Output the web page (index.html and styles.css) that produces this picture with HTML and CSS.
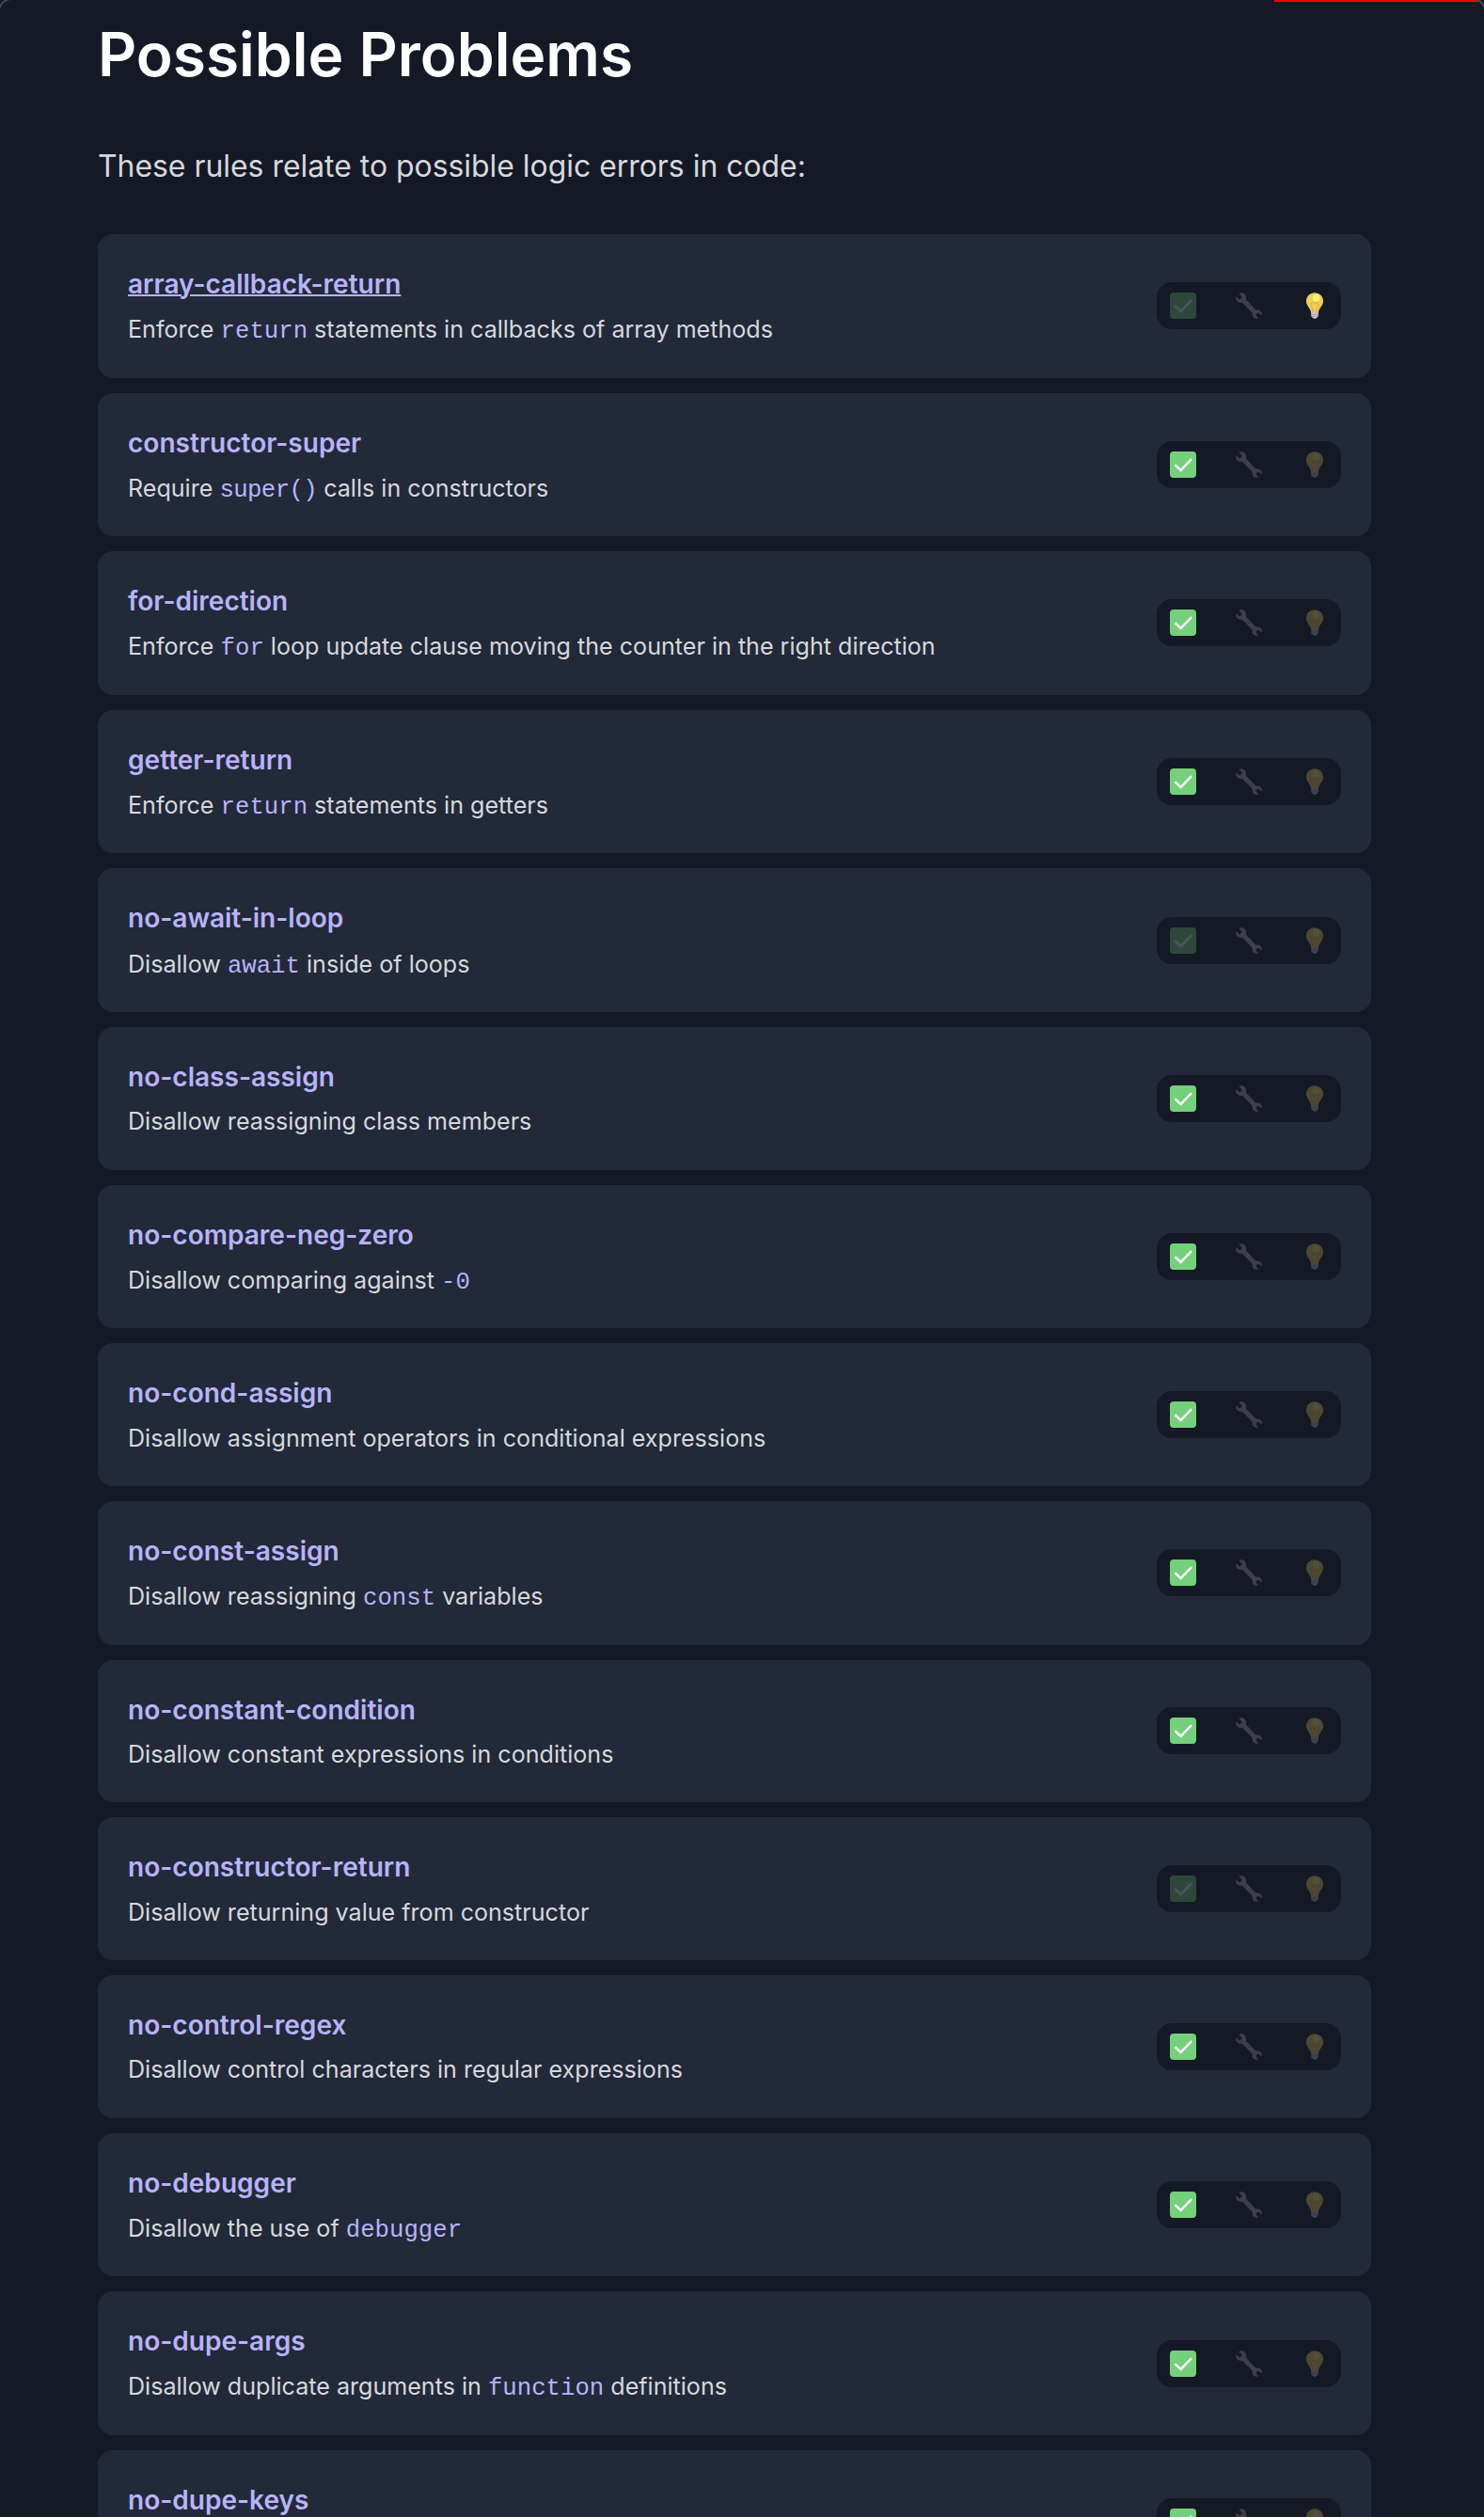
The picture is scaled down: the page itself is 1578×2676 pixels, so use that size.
FILE: index.html
```html
<!DOCTYPE html>
<html lang="en">
<head>
<meta charset="utf-8">
<title>Possible Problems</title>
<link rel="stylesheet" href="styles.css">
</head>
<body>
<div class="progress"></div>
<div class="frame"></div>
<svg class="defs" aria-hidden="true">
  <symbol id="check" viewBox="0 0 28 28">
    <rect width="28" height="28" rx="4" fill="#74d07a"/>
    <path d="M6 14.8 11.6 20 22.3 8.8" fill="none" stroke="#f3f5f4" stroke-width="2.6" stroke-linecap="round" stroke-linejoin="miter"/>
  </symbol>
  <symbol id="wrench" viewBox="0 0 28 28">
    <path fill="#ada9b2" d="M4.3.6C7.700-.8 11.500 2 11 6.200L10.800 7.400 21.300 18.600C24.500 17.900 27.900 19.500 28 23.500L27.300 24.200 24.800 22C23.400 20.900 20.700 23.500 21.900 25L24.100 27.300 23.300 27.800C19.600 28.300 16.900 25.400 17.700 21.700L6.900 10.800C3.300 11.500.4 9.200.1 5.500L.8 4.600 3.400 6.900C4.800 8 7.300 5.500 6.200 4L3.600 1.500Z"/>
  </symbol>
  <symbol id="bulb" viewBox="0 0 28 28">
    <path fill="#efcf58" d="M14 .2c5 0 9 3.900 9 8.700 0 5.500-4.600 7-5.300 13.100h-7.400C9.600 15.900 5 14.400 5 8.900 5 4.100 9 .2 14 .2Z"/>
    <path fill="none" stroke="#e5a83f" stroke-width="1" d="M12.300 21.500C12 16.500 9.300 14 10.100 11.500c.6-1.700 2.600-1.300 3 .3h2c.4-1.600 2.500-2 3-.3.700 2.500-2 5-2.400 10"/>
    <circle cx="15.500" cy="5.800" r="3.700" fill="#f9f17e"/>
    <path fill="#c9c9d0" d="M10.200 21.300h7.600v3.500l-1.600 2.200c-1.200 1-3.200 1-4.400 0l-1.600-2.200Z"/>
    <path stroke="#96969f" stroke-width=".8" d="m10.200 23.700 7.600-1M10.300 25.700l7.300-1"/>
  </symbol>
</svg>
<main class="page">
  <h1 class="title">Possible Problems</h1>
  <p class="intro">These rules relate to possible logic errors in code:</p>
  <div class="rules" id="rules"></div>
</main>
<script src="rules.js"></script>
</body>
</html>
```
FILE: rules.js
```js
// [name, description, recommended, has suggestions]
const rules = [
  ["array-callback-return", "Enforce <code>return</code> statements in callbacks of array methods", false, true],
  ["constructor-super", "Require <code class=\"call\">super()</code> calls in constructors", true, false],
  ["for-direction", "Enforce <code>for</code> loop update clause moving the counter in the right direction", true, false],
  ["getter-return", "Enforce <code>return</code> statements in getters", true, false],
  ["no-await-in-loop", "Disallow <code>await</code> inside of loops", false, false],
  ["no-class-assign", "Disallow reassigning class members", true, false],
  ["no-compare-neg-zero", "Disallow comparing against <code>-0</code>", true, false],
  ["no-cond-assign", "Disallow assignment operators in conditional expressions", true, false],
  ["no-const-assign", "Disallow reassigning <code>const</code> variables", true, false],
  ["no-constant-condition", "Disallow constant expressions in conditions", true, false],
  ["no-constructor-return", "Disallow returning value from constructor", false, false],
  ["no-control-regex", "Disallow control characters in regular expressions", true, false],
  ["no-debugger", "Disallow the use of <code>debugger</code>", true, false],
  ["no-dupe-args", "Disallow duplicate arguments in <code>function</code> definitions", true, false],
  ["no-dupe-keys", "", true, false]
];

const icon = (id, on) =>
  `<svg class="icon${on ? "" : " icon-off"}"><use href="#${id}"/></svg>`;

document.getElementById("rules").innerHTML = rules.map(([name, text, recommended, suggestions], i) => `
  <article class="rule">
    <div class="rule-text">
      <a class="rule-name${i === 0 ? " rule-name-hover" : ""}">${name}</a>
      <p class="rule-desc${text.includes("<code") ? " with-code" : ""}">${text}</p>
    </div>
    <div class="rule-types">${icon("check", recommended)}${icon("wrench", false)}${icon("bulb", suggestions)}</div>
  </article>`).join("");
```
FILE: styles.css
```css
html {
  background: #151926;
}

body {
  margin: 0;
  height: 2676px;
  overflow: hidden;
  background: #151926;
  color: #d5d8dd;
  font-family: Inter, sans-serif;
}

.defs {
  display: none;
}

.progress {
  position: absolute;
  top: 0;
  right: 0;
  width: 223px;
  height: 2px;
  background: #f00;
}

.frame {
  position: absolute;
  top: -2px;
  left: -2px;
  right: -2px;
  height: 2700px;
  border: 2px solid #44474f;
  border-radius: 14px;
  box-shadow: 0 0 0 6px #151926;
}

.page {
  padding: 19.6px 120px 0 104px;
}

.title {
  margin: 0;
  color: #fff;
  font-size: 64px;
  font-weight: 570;
  line-height: 76.8px;
}

.intro {
  margin: 57px 0 47.6px;
  font-size: 31.9px;
  line-height: 48px;
}

.rules {
  display: flex;
  flex-direction: column;
  gap: 16px;
}

.rule {
  display: flex;
  align-items: center;
  justify-content: space-between;
  padding: 32px;
  border-radius: 16px;
  background: #222938;
}

.rule-name {
  display: block;
  width: max-content;
  color: #b7b3fa;
  font-size: 28.05px;
  font-weight: 600;
  line-height: 42px;
}

.rule-name-hover {
  text-decoration: underline;
  text-decoration-thickness: 2px;
}

.rule-desc {
  min-height: 37.4px;
  margin: 8.3px 0 0;
  font-size: 25.1px;
  line-height: 37.4px;
}

.rule-desc.with-code {
  margin-top: 9.2px;
}

.rule-desc code {
  color: #b7b3fa;
  font-family: "Liberation Mono", monospace;
  font-size: 25.7px;
  line-height: 1;
}

.rule-desc .call {
  letter-spacing: -0.6px;
}

.rule-types {
  display: flex;
  align-items: center;
  justify-content: space-between;
  box-sizing: border-box;
  width: 196px;
  height: 50px;
  padding: 0 14px 0 13.5px;
  border-radius: 16px;
  background: #151926;
}

.icon {
  width: 28px;
  height: 28px;
}

.icon-off {
  opacity: 0.26;
}
```
